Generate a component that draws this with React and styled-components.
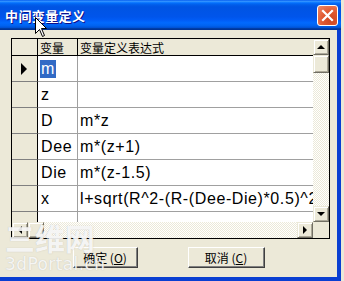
import React from 'react';
import styled, { createGlobalStyle } from 'styled-components';

const GlobalStyle = createGlobalStyle`
  html, body {
    margin: 0;
    padding: 0;
    background: #ECE9D8;
    overflow: hidden;
  }
`;

const CJK = `"Noto Sans CJK SC", "Liberation Sans", sans-serif`;
const TRACK = `repeating-conic-gradient(#ffffff 0 25%, #ECE9D8 0 50%) 0 0 / 2px 2px`;

const Window = styled.div`
  position: relative;
  width: 341px;
  height: 281px;
  display: flex;
  flex-direction: column;
  overflow: hidden;
`;

const TitleBar = styled.div`
  height: 30px;
  flex: none;
  display: flex;
  align-items: center;
  justify-content: space-between;
  padding: 0 3px 0 5px;
  background: linear-gradient(to bottom, #0058ee 0%, #3593ff 4%, #288eff 6%, #127dff 8%,
    #036ffc 10%, #0262ee 14%, #0057e5 20%, #0054e3 24%, #0055eb 56%, #005bf5 66%,
    #026afe 76%, #0062ef 86%, #0052d6 92%, #0040ab 94%, #003092 100%);
`;

const Title = styled.span`
  font-family: ${CJK};
  font-weight: bold;
  font-size: 13px;
  color: #fff;
  letter-spacing: 0.4px;
  text-shadow: 1px 1px #0f1089;
`;

const CloseButton = styled.div`
  width: 21px;
  height: 21px;
  box-sizing: border-box;
  border: 1px solid #fff;
  border-radius: 3px;
  background: radial-gradient(circle at 70% 75%, #cc4621 0%, #e0582f 45%, #f08b6a 100%);
  display: flex;
  align-items: center;
  justify-content: center;
`;

const Frame = styled.div`
  flex: 1;
  background: #ECE9D8;
  border-right: 4px solid #0a3fd2;
  border-bottom: 4px solid #0a3fd2;
  padding-top: 8px;
  display: flex;
  flex-direction: column;
`;

const GridFrame = styled.div`
  margin-left: 11px;
  width: 319px;
  height: 201px;
  box-sizing: border-box;
  border: 1px solid #000;
  display: grid;
  grid-template-columns: 301px 16px;
  grid-template-rows: 183px 16px;
  background: #fff;
`;

const Table = styled.div`
  overflow: hidden;
  display: grid;
  grid-template-columns: 26px 40px 440px;
  grid-auto-rows: 26px;
  grid-template-rows: 17px;
  align-content: start;
`;

const Cell = styled.div`
  box-sizing: border-box;
  display: flex;
  align-items: center;
  overflow: hidden;
  white-space: nowrap;
  background: ${p => (p.$kind === 'data' ? '#fff' : '#ECE9D8')};
  border-bottom: 1px solid ${p => (p.$kind === 'head' || p.$kind === 'corner' ? '#000' : p.$kind === 'rowhead' ? '#808080' : '#a0a0a0')};
  border-right: 1px solid ${p => (p.$kind === 'data' ? '#a0a0a0' : '#000')};
  font-family: ${p => (p.$kind === 'head' ? CJK : '"Liberation Sans", Arial, sans-serif')};
  font-size: ${p => (p.$kind === 'head' ? '12px' : '16px')};
  letter-spacing: ${p => (p.$kind === 'data' ? '0.6px' : '0')};
  padding-left: ${p => p.$pad || 0}px;
  justify-content: ${p => (p.$kind === 'rowhead' ? 'center' : 'flex-start')};
  color: #000;
`;

const Selected = styled.span`
  background: #316ac5;
  color: #fff;
  line-height: 18px;
  padding: 0 1px;
  margin-left: -1px;
`;

const Indicator = styled.span`
  width: 0;
  height: 0;
  border-top: 6px solid transparent;
  border-bottom: 6px solid transparent;
  border-left: 6px solid #000;
  margin-left: -2px;
`;

const NewMark = styled.span`
  font-family: "Liberation Sans", sans-serif;
  font-size: 14px;
  margin-top: 4px;
`;

const ScrollBar = styled.div`
  display: flex;
  flex-direction: ${p => (p.$vertical ? 'column' : 'row')};
  background: ${TRACK};
`;

const Track = styled.div`
  flex: 1;
`;

const ScrollButton = styled.div`
  width: 16px;
  height: ${p => p.$h || 16}px;
  flex: none;
  box-sizing: border-box;
  background: #ECE9D8;
  border-top: 1px solid #ECE9D8;
  border-left: 1px solid #ECE9D8;
  border-right: 1px solid #716f64;
  border-bottom: 1px solid #716f64;
  box-shadow: inset 1px 1px #fff, inset -1px -1px #aca899;
  display: flex;
  align-items: center;
  justify-content: center;
`;

const Arrow = styled.span`
  width: 0;
  height: 0;
  ${p => p.$dir === 'up' && 'border-left: 4px solid transparent; border-right: 4px solid transparent; border-bottom: 4px solid #000;'}
  ${p => p.$dir === 'down' && 'border-left: 4px solid transparent; border-right: 4px solid transparent; border-top: 4px solid #000;'}
  ${p => p.$dir === 'left' && 'border-top: 4px solid transparent; border-bottom: 4px solid transparent; border-right: 4px solid #000;'}
  ${p => p.$dir === 'right' && 'border-top: 4px solid transparent; border-bottom: 4px solid transparent; border-left: 4px solid #000;'}
`;

const Corner = styled.div`
  background: #ECE9D8;
`;

const ButtonRow = styled.div`
  display: flex;
  justify-content: center;
  gap: 50px;
  margin-top: 8px;
`;

const DialogButton = styled.button`
  width: ${p => p.$w}px;
  height: 21px;
  box-sizing: border-box;
  padding: 0;
  background: #ECE9D8;
  border: 1px solid;
  border-color: #fff #404040 #404040 #fff;
  box-shadow: inset -1px -1px #808080;
  font-family: ${CJK};
  font-size: 12px;
  color: #000;
  line-height: 1;
  u {
    text-underline-offset: 1px;
  }
`;

const Watermark = styled.div`
  position: absolute;
  left: 5px;
  top: 219px;
  display: flex;
  flex-direction: column;
  color: rgba(255, 255, 255, 0.85);
  pointer-events: none;
  text-shadow: 0 0 1px rgba(150, 150, 150, 0.55);
`;

const WatermarkBig = styled.span`
  font-family: ${CJK};
  font-weight: bold;
  font-size: 30px;
  line-height: 36px;
  letter-spacing: 0;
`;

const WatermarkSmall = styled.span`
  font-family: "DejaVu Sans", sans-serif;
  font-size: 17px;
  line-height: 18px;
  letter-spacing: 0.4px;
`;

const Cursor = styled.svg`
  position: absolute;
  left: 35px;
  top: 17px;
`;

const rows = [
  { name: 'm', expr: '', current: true },
  { name: 'z', expr: '' },
  { name: 'D', expr: 'm*z' },
  { name: 'Dee', expr: 'm*(z+1)' },
  { name: 'Die', expr: 'm*(z-1.5)' },
  { name: 'x', expr: 'l+sqrt(R^2-(R-(Dee-Die)*0.5)^2)' },
];

export default function App() {
  return (
    <>
      <GlobalStyle />
      <Window>
        <TitleBar>
          <Title>中间变量定义</Title>
          <CloseButton>
            <svg width="13" height="13" viewBox="0 0 13 13">
              <path d="M2 2 L11 11 M11 2 L2 11" stroke="#fff" strokeWidth="2.2" strokeLinecap="square" />
            </svg>
          </CloseButton>
        </TitleBar>
        <Frame>
          <GridFrame>
            <Table>
              <Cell $kind="corner" />
              <Cell $kind="head" $pad={2}>变量</Cell>
              <Cell $kind="head" $pad={2}>变量定义表达式</Cell>
              {rows.map(r => (
                <React.Fragment key={r.name}>
                  <Cell $kind="rowhead">{r.current && <Indicator />}</Cell>
                  <Cell $kind="data" $pad={3}>
                    {r.current ? <Selected>{r.name}</Selected> : r.name}
                  </Cell>
                  <Cell $kind="data" $pad={2}>{r.expr}</Cell>
                </React.Fragment>
              ))}
              <Cell $kind="rowhead"><NewMark>*</NewMark></Cell>
              <Cell $kind="data" />
              <Cell $kind="data" />
            </Table>
            <ScrollBar $vertical>
              <ScrollButton><Arrow $dir="up" /></ScrollButton>
              <ScrollButton $h={18} />
              <Track />
              <ScrollButton><Arrow $dir="down" /></ScrollButton>
            </ScrollBar>
            <ScrollBar>
              <ScrollButton><Arrow $dir="left" /></ScrollButton>
              <ScrollButton />
              <Track />
              <ScrollButton><Arrow $dir="right" /></ScrollButton>
            </ScrollBar>
            <Corner />
          </GridFrame>
          <ButtonRow>
            <DialogButton $w={65}>确定 (<u>O</u>)</DialogButton>
            <DialogButton $w={77}>取消 (<u>C</u>)</DialogButton>
          </ButtonRow>
        </Frame>
        <Watermark>
          <WatermarkBig>三维网</WatermarkBig>
          <WatermarkSmall>3dPortal.cn</WatermarkSmall>
        </Watermark>
        <Cursor width="13" height="21" viewBox="0 0 13 21">
          <path d="M0.5 0.5 L0.5 16.5 L4.5 12.5 L7.5 19.5 L9.5 18.5 L6.5 11.5 L11.5 11.5 Z" fill="#fff" stroke="#000" strokeWidth="1" />
        </Cursor>
      </Window>
    </>
  );
}
